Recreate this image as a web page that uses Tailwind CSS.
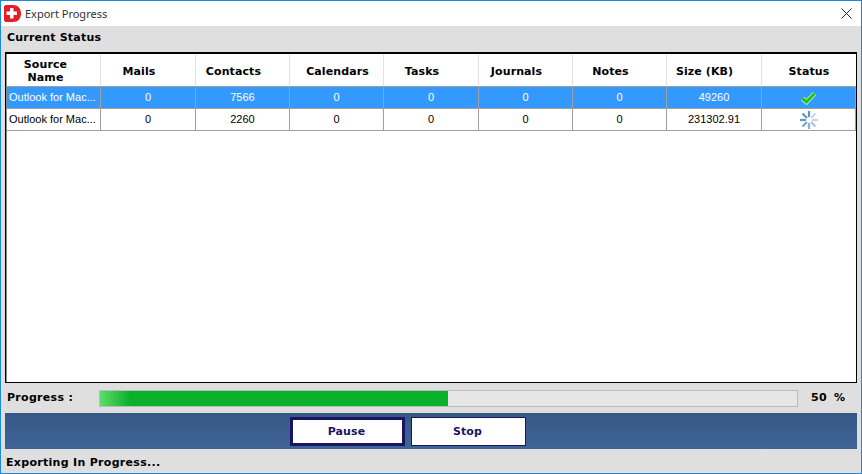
<!DOCTYPE html>
<html>
<head>
<script src="https://cdn.jsdelivr.net/npm/@tailwindcss/browser@4"></script>
</head>
<body class="m-0 bg-white">
<div class="w-[862px] h-[474px] flex flex-col border border-[#1c8ad8] bg-[#dfdfdf] overflow-hidden font-['Liberation_Sans',sans-serif]">
  <div class="h-[25px] shrink-0 bg-white flex items-center pl-[3px] pr-[9px]">
    <svg width="17" height="17" viewBox="0 0 17 17" class="shrink-0"><path d="M0 1H1V0H9C14 0 17 3.500 17 8.500S14 17 9 17H1V16H0Z" fill="#e81c26"/><path d="M6 3h3.500v3.500H13V10H9.500v3.500H6V10H2.500V6.500H6Z" fill="#fff"/></svg>
    <span class="ml-[4px] text-[11px] text-[#333] font-['Noto_Sans',sans-serif] leading-none">Export Progress</span>
    <svg width="11" height="11" viewBox="0 0 11 11" class="ml-auto"><path d="M.5.5 10.500 10.500M10.500.5.5 10.500" stroke="#222" stroke-width="1" fill="none"/></svg>
  </div>
  <div class="h-[26px] shrink-0 flex items-center pl-[6px] pb-[2px] font-['DejaVu_Sans',sans-serif] font-bold text-[11px] tracking-[0.2px] text-black">Current Status</div>
  <div class="mx-[4px] h-[331px] shrink-0 border border-t-2 border-black bg-white">
    <div class="h-full border-l border-[#8a8a8a]">
    <div class="grid grid-cols-[94px_95px_94px_94px_95px_94px_94px_95px_94px] h-[33px] border-b border-[#a0a0a0] font-['DejaVu_Sans',sans-serif] font-bold text-[11px] tracking-[0.1px] text-black text-center leading-[13px]">
      <div class="flex items-center justify-center pr-[16px] pt-[2px] border-r border-[#e3e3e3]">Source<br>Name</div>
      <div class="flex items-center justify-center pr-[18px] pt-[2px] border-r border-[#e3e3e3]">Mails</div>
      <div class="flex items-center justify-center pr-[18px] pt-[2px] border-r border-[#e3e3e3]">Contacts</div>
      <div class="flex items-center justify-center pl-[2px] pt-[2px] border-r border-[#e3e3e3]">Calendars</div>
      <div class="flex items-center justify-center pr-[18px] pt-[2px] border-r border-[#e3e3e3]">Tasks</div>
      <div class="flex items-center justify-center pr-[18px] pt-[2px] border-r border-[#e3e3e3]">Journals</div>
      <div class="flex items-center justify-center pr-[18px] pt-[2px] border-r border-[#e3e3e3]">Notes</div>
      <div class="flex items-center justify-center pr-[19px] pt-[2px] border-r border-[#e3e3e3]">Size (KB)</div>
      <div class="flex items-center justify-center pt-[2px]">Status</div>
    </div>
    <div class="grid grid-cols-[94px_95px_94px_94px_95px_94px_94px_95px_94px] h-[22px] border-b border-[#a0a0a0] bg-[#3399ff] text-white text-[11px] text-center">
      <div class="flex items-center pl-[2px] border-r border-[#a0a0a0] whitespace-nowrap">Outlook for Mac...</div>
      <div class="flex items-center justify-center border-r border-[#a0a0a0]">0</div>
      <div class="flex items-center justify-center border-r border-[#a0a0a0]">7566</div>
      <div class="flex items-center justify-center border-r border-[#a0a0a0]">0</div>
      <div class="flex items-center justify-center border-r border-[#a0a0a0]">0</div>
      <div class="flex items-center justify-center border-r border-[#a0a0a0]">0</div>
      <div class="flex items-center justify-center border-r border-[#a0a0a0]">0</div>
      <div class="flex items-center justify-center border-r border-[#a0a0a0]">49260</div>
      <div class="flex items-center justify-center border-r border-[#a0a0a0]">
        <svg width="17" height="14" viewBox="0 0 17 14" fill="none"><path d="M2.500 7.500 6.500 11 14.500 2.500" stroke="#d4f2cc" stroke-width="4.500"/><path d="M2.500 7.500 6.500 11 14.500 2.500" stroke="#24c012" stroke-width="3"/></svg>
      </div>
    </div>
    <div class="grid grid-cols-[94px_95px_94px_94px_95px_94px_94px_95px_94px] h-[22px] border-b border-[#a0a0a0] bg-white text-black text-[11px] text-center">
      <div class="flex items-center pl-[2px] border-r border-[#a0a0a0] whitespace-nowrap">Outlook for Mac...</div>
      <div class="flex items-center justify-center border-r border-[#a0a0a0]">0</div>
      <div class="flex items-center justify-center border-r border-[#a0a0a0]">2260</div>
      <div class="flex items-center justify-center border-r border-[#a0a0a0]">0</div>
      <div class="flex items-center justify-center border-r border-[#a0a0a0]">0</div>
      <div class="flex items-center justify-center border-r border-[#a0a0a0]">0</div>
      <div class="flex items-center justify-center border-r border-[#a0a0a0]">0</div>
      <div class="flex items-center justify-center border-r border-[#a0a0a0]">231302.91</div>
      <div class="flex items-center justify-center border-r border-[#a0a0a0]">
        <svg width="18" height="18" viewBox="0 0 18 18" fill="none" stroke-width="2.200"><path d="M9 0v6" stroke="#5f93bf"/><path d="M15.500 2.500 11 7" stroke="#c5d9ea"/><path d="M18 9h-6" stroke="#c0d5e6"/><path d="M15.500 15.500 11 11" stroke="#a9c5dc"/><path d="M9 18v-6" stroke="#8fb2d0"/><path d="M2.500 15.500 7 11" stroke="#79a3c6"/><path d="M0 9h6" stroke="#6497c0"/><path d="M2.500 2.500 7 7" stroke="#5f93bf"/></svg>
      </div>
    </div>
    </div>
  </div>
  <div class="h-[30px] shrink-0 flex items-center font-['DejaVu_Sans',sans-serif] font-bold text-[11px] text-black">
    <span class="w-[98px] pl-[6px] pt-[1px] tracking-[0.3px]">Progress :</span>
    <div class="w-[699px] h-[17px] bg-[#e6e6e6] border border-[#bcbcbc] overflow-hidden">
      <div class="w-[348px] h-full bg-[linear-gradient(90deg,#5fdc6a_0px,#0bb02a_30px,#09b029_100%)]"></div>
    </div>
    <span class="ml-[13px] tracking-[0.3px] [word-spacing:3px]">50 %</span>
  </div>
  <div class="mx-[4px] h-[36px] shrink-0 bg-[linear-gradient(180deg,#375887,#3f6497)] flex items-center pl-[285px] gap-[6px] font-['DejaVu_Sans',sans-serif] font-bold text-[11px] tracking-[0.1px] text-[#1b1464]">
    <button class="w-[115px] h-[29px] pt-[3px] pr-[2px] bg-white border-[3px] border-[#1b1464] font-bold">Pause</button>
    <button class="w-[115px] h-[29px] pt-[3px] pr-[2px] bg-white border border-[#1b1464] font-bold">Stop</button>
  </div>
  <div class="flex-1 flex items-center pl-[5px] pt-[4px] font-['DejaVu_Sans',sans-serif] font-bold text-[11px] tracking-[0.3px] text-black">Exporting In Progress...</div>
</div>
</body>
</html>
